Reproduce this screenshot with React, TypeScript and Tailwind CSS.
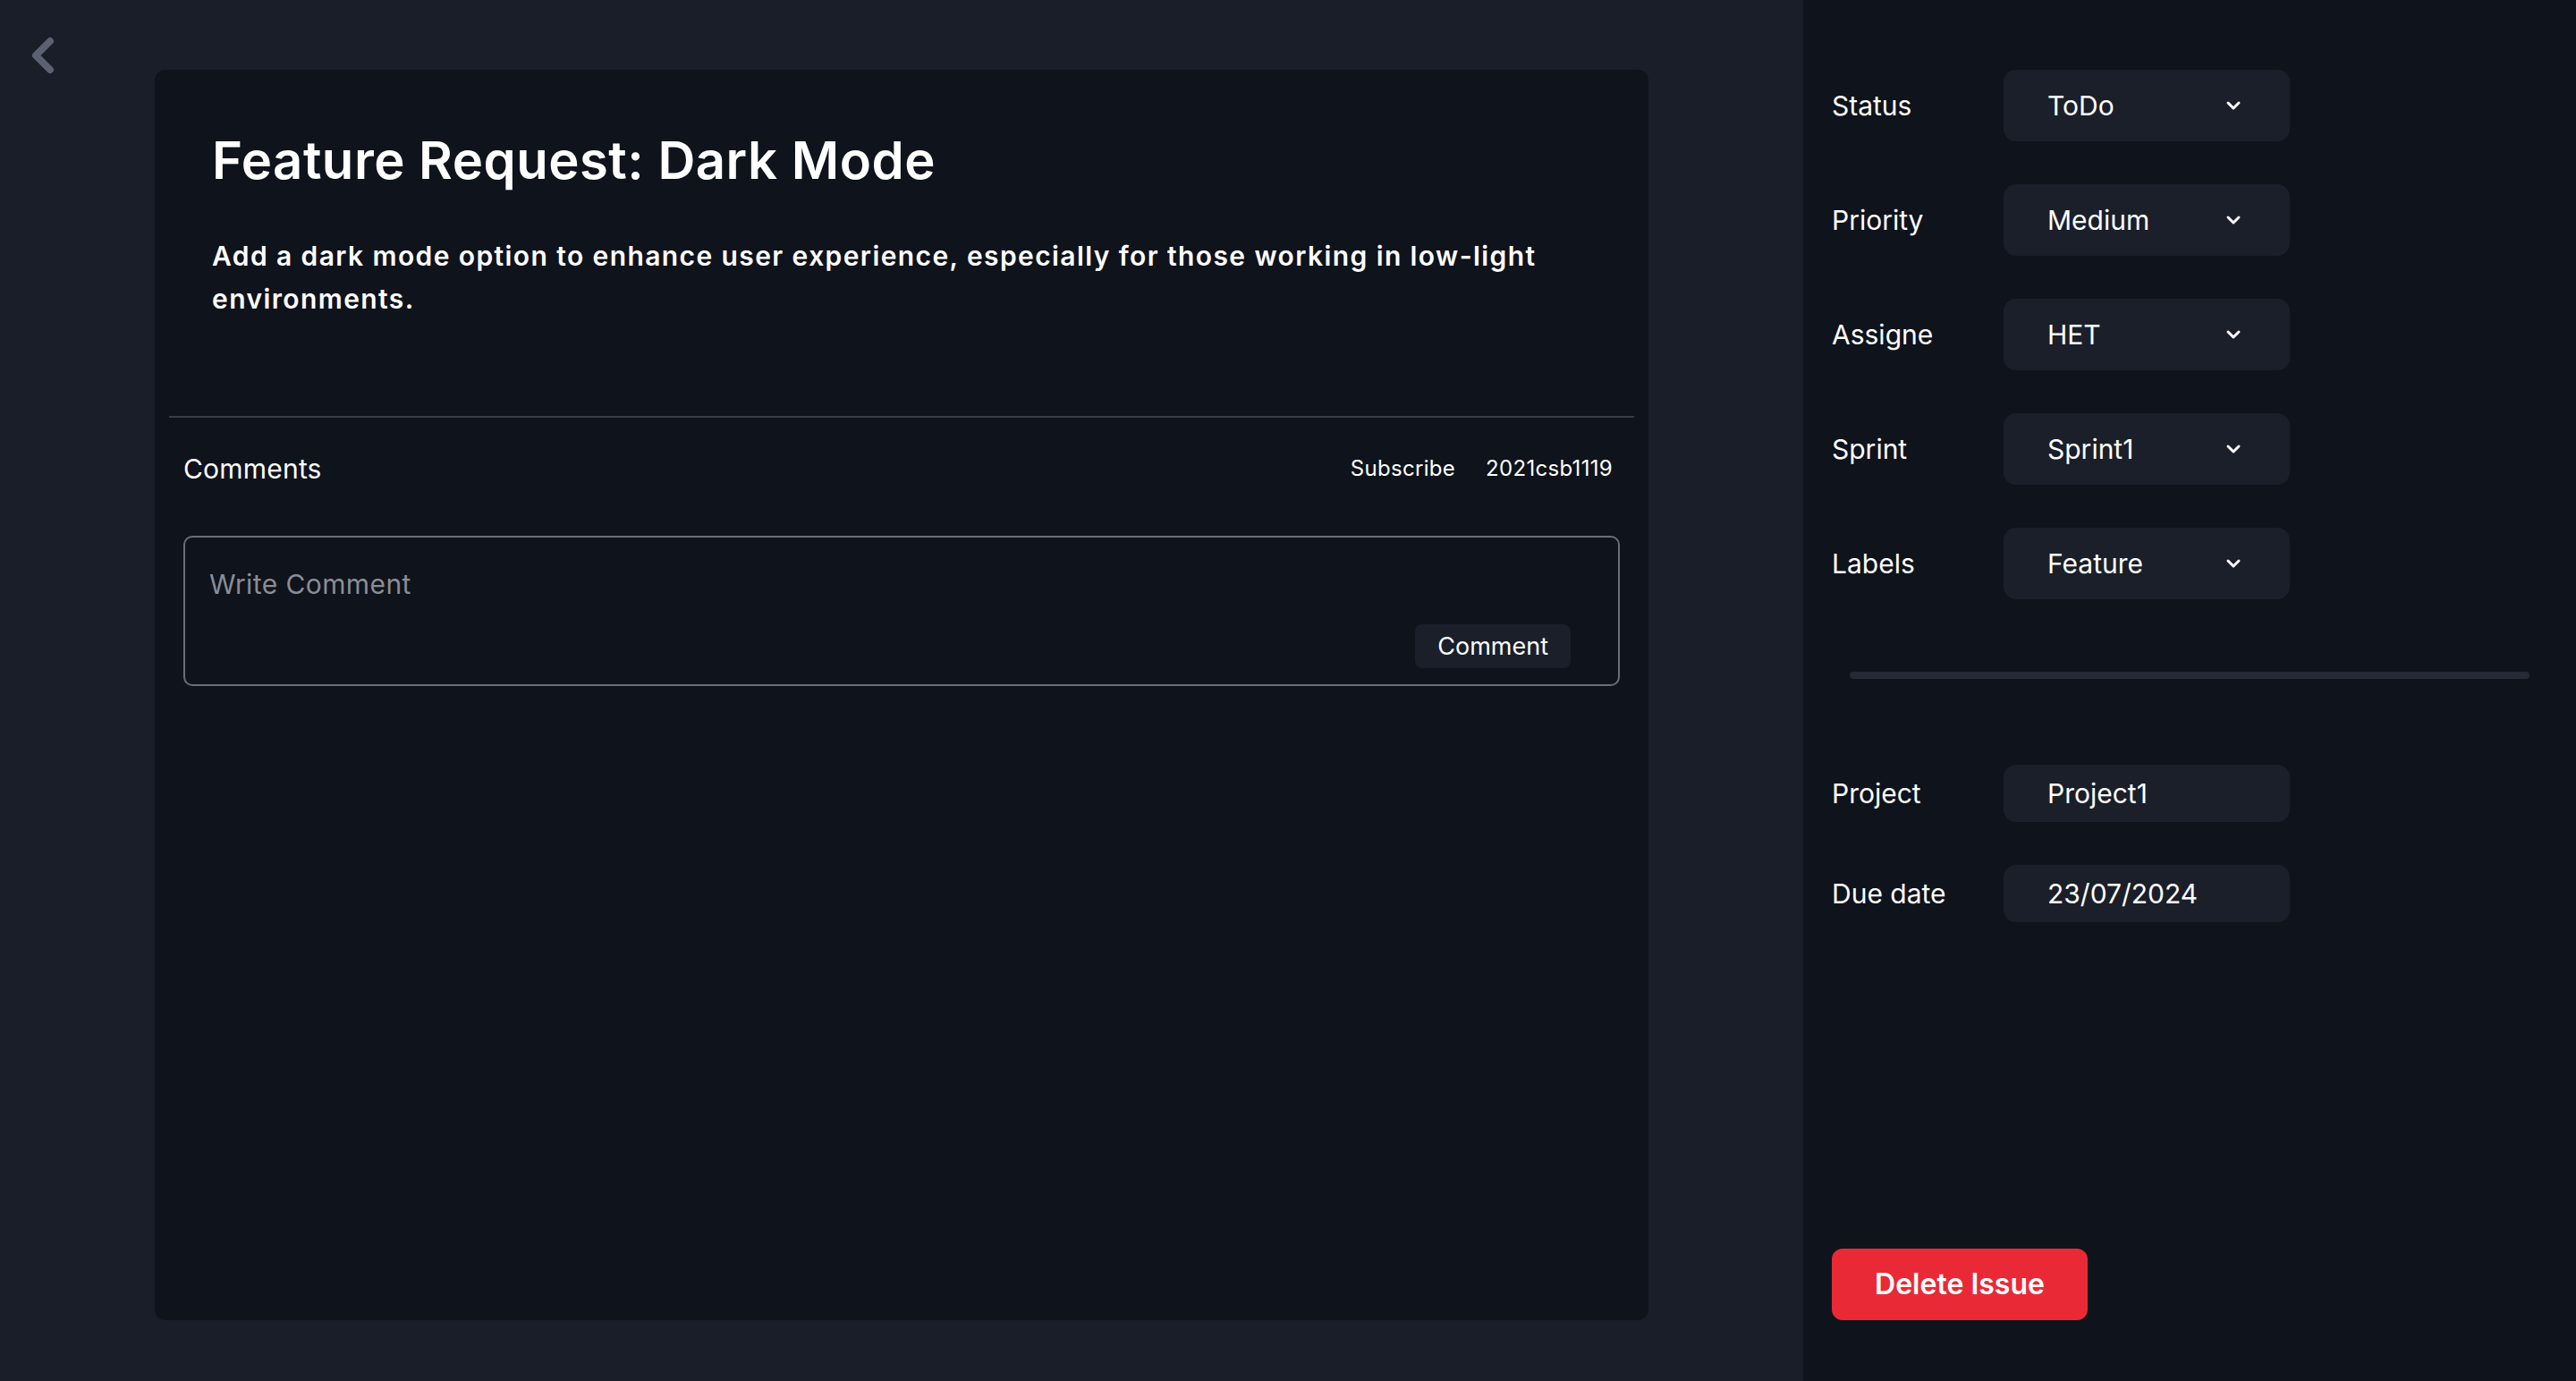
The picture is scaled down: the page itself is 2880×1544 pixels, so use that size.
import { useState } from "react";

const fields = [
  { label: "Status", value: "ToDo" },
  { label: "Priority", value: "Medium" },
  { label: "Assigne", value: "HET" },
  { label: "Sprint", value: "Sprint1" },
  { label: "Labels", value: "Feature" },
];

const details = [
  { label: "Project", value: "Project1" },
  { label: "Due date", value: "23/07/2024" },
];

function ChevronDown() {
  return (
    <svg width="18" height="12" viewBox="0 0 18 12" fill="none" className="shrink-0">
      <path
        d="M3 3l6 6 6-6"
        stroke="white"
        strokeWidth="3"
        strokeLinecap="round"
        strokeLinejoin="round"
      />
    </svg>
  );
}

export default function App() {
  const [comment, setComment] = useState("");

  return (
    <div className="flex h-screen w-full bg-[#191e29] font-['Inter',sans-serif] text-white">
      {/* Main */}
      <div className="relative flex flex-1 flex-col pt-[78px] pb-[68px]">
        <button className="absolute left-[32px] top-[38px] p-0">
          <svg width="32" height="48" viewBox="0 0 32 48" fill="none">
            <path
              d="M24 8L8 24l16 16"
              stroke="#5b6170"
              strokeWidth="8"
              strokeLinecap="round"
              strokeLinejoin="round"
            />
          </svg>
        </button>

        <div className="mx-auto flex w-[1670px] flex-1 flex-col rounded-[12px] bg-[#0f131c] p-4">
          {/* Title */}
          <div className="px-12 pt-[50px] pb-[107px]">
            <h1 className="text-[58px] leading-[70px] font-semibold tracking-[0.5px]">
              Feature Request: Dark Mode
            </h1>
            <p className="mt-12 text-[30px] leading-[48px] font-semibold tracking-[1.4px]">
              Add a dark mode option to enhance user experience, especially for
              those working in low-light environments.
            </p>
          </div>

          <div className="h-[2px] w-full bg-[#3a3e48]" />

          {/* Comments */}
          <div className="px-4">
            <div className="mt-[39px] flex items-center justify-between pr-2">
              <span className="text-[30px] leading-[36px] tracking-[0.2px]">Comments</span>
              <div className="flex items-center gap-[34px] text-[24px] leading-[36px] tracking-[0.3px]">
                <span>Subscribe</span>
                <span>2021csb1119</span>
              </div>
            </div>

            <div className="mt-[57px] flex flex-col rounded-[10px] border-2 border-[#6b6e75] pt-[34px] pr-[53px] pb-[18px] pl-[27px]">
              <textarea
                rows={1}
                value={comment}
                onChange={(e) => setComment(e.target.value)}
                placeholder="Write Comment"
                className="h-[36px] resize-none bg-transparent text-[30px] leading-[36px] tracking-[0.4px] text-white outline-none placeholder:text-[#8a8d95]"
              />
              <div className="mt-[27px] flex justify-end">
                <button className="h-[49px] rounded-[8px] bg-[#1b1f2a] px-[25px] text-[27px] leading-[49px]">
                  Comment
                </button>
              </div>
            </div>
          </div>
        </div>
      </div>

      {/* Side panel */}
      <aside className="flex w-[864px] flex-col bg-[#0f131c] px-8 pt-[78px] pb-[68px]">
        <div className="flex flex-col gap-12">
          {fields.map((f) => (
            <div key={f.label} className="flex items-center">
              <span className="w-48 text-[30px] leading-[36px]">{f.label}</span>
              <div className="flex h-20 w-[320px] items-center justify-between rounded-[14px] bg-[#1b1f2a] pr-[54px] pl-[49px]">
                <span className="text-[30px] leading-[36px]">{f.value}</span>
                <ChevronDown />
              </div>
            </div>
          ))}
        </div>

        <div className="mx-5 mt-[81px] h-2 rounded-full bg-[#252a35]" />

        <div className="mt-[96px] flex flex-col gap-12">
          {details.map((d) => (
            <div key={d.label} className="flex items-center">
              <span className="w-48 text-[30px] leading-[36px]">{d.label}</span>
              <div className="flex h-16 w-[320px] items-center rounded-[14px] bg-[#1b1f2a] pl-[49px]">
                <span className="text-[30px] leading-[36px]">{d.value}</span>
              </div>
            </div>
          ))}
        </div>

        <button className="mt-auto h-20 w-[286px] rounded-[12px] bg-[#e92a36] text-[32px] leading-[80px] font-semibold">
          Delete Issue
        </button>
      </aside>
    </div>
  );
}
